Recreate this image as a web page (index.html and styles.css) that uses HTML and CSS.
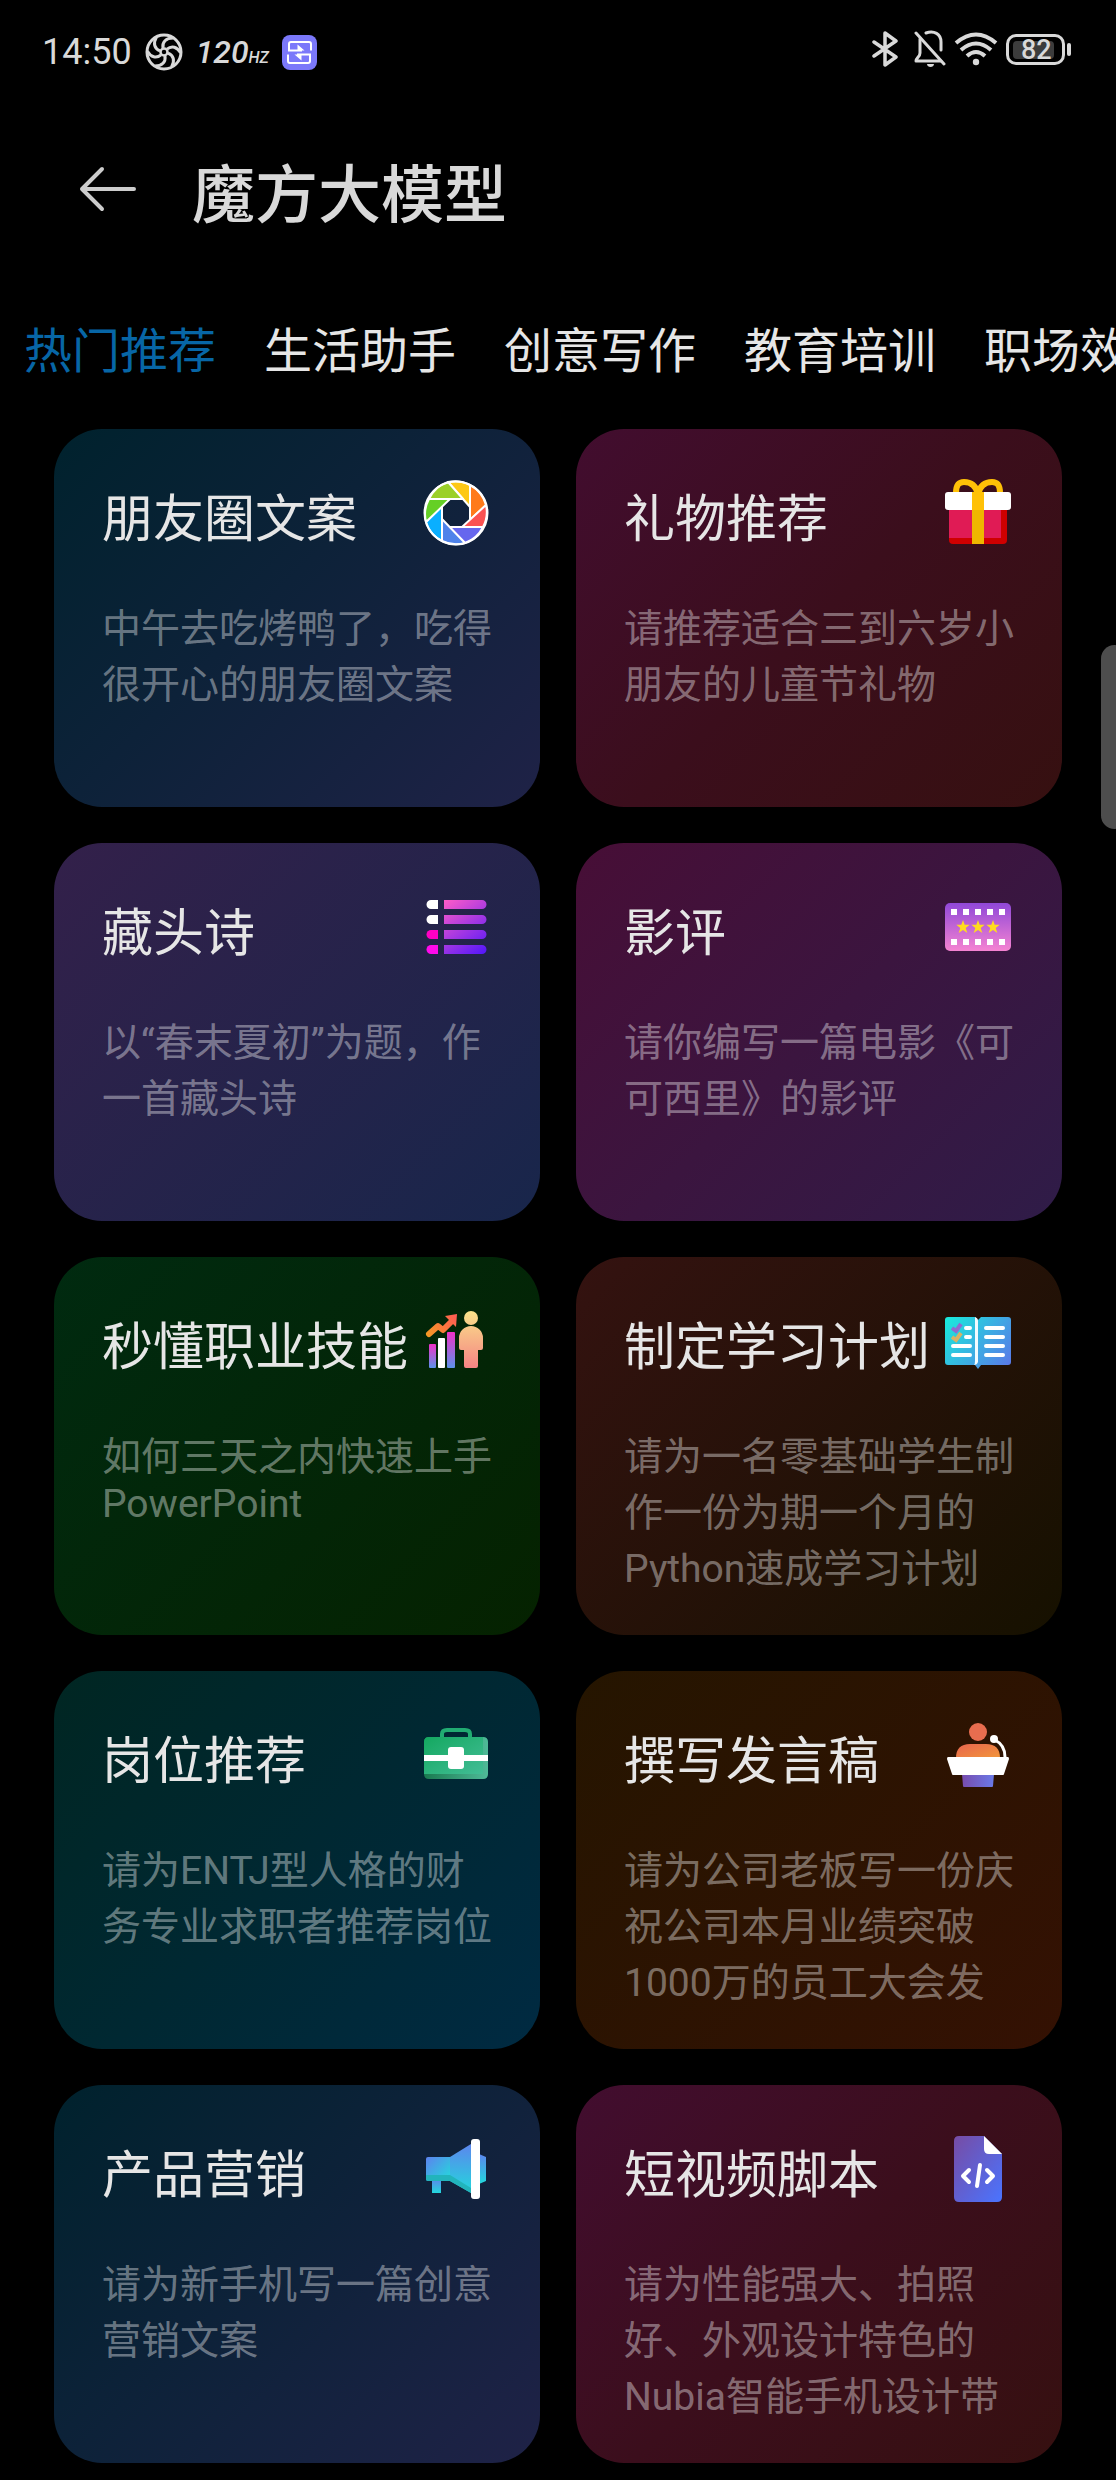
FILE: index.html
```html
<!DOCTYPE html>
<html lang="zh-CN">
<head>
    <meta charset="utf-8">
    <meta name="viewport" content="width=device-width, initial-scale=1">
    <title>魔方大模型</title>
    <link rel="stylesheet" href="styles.css">
</head>
<body>
    <div class="status-bar">
        <div class="status-left">
            <span class="time">14:50</span>
            <svg class="icon-fan" width="38" height="38" viewBox="0 0 38 38" fill="none" stroke="#d9d9d9" stroke-width="3">
                <circle cx="19" cy="19" r="17"/>
                <circle cx="19" cy="19" r="3.500" stroke-width="2.500"/>
                <g id="blade"><path d="M18 15C17 9 21 5 28 5"/></g>
                <use href="#blade" transform="rotate(60 19 19)"/>
                <use href="#blade" transform="rotate(120 19 19)"/>
                <use href="#blade" transform="rotate(180 19 19)"/>
                <use href="#blade" transform="rotate(240 19 19)"/>
                <use href="#blade" transform="rotate(300 19 19)"/>
            </svg>
            <span class="refresh">120<small>HZ</small></span>
            <svg width="35" height="35" viewBox="0 0 35 35">
                <rect width="35" height="35" rx="8" fill="#7b78fa"/>
                <path d="M29 15.500V9a2 2 0 0 0-2-2H9a2 2 0 0 0-2 2v6.500h13M6 19.500V26a2 2 0 0 0 2 2h18a2 2 0 0 0 2-2v-6.500H15" fill="none" stroke="#fff" stroke-width="2"/>
                <path d="M15.500 9.500l7 6h-7zM19.500 25.500l-7-6h7z" fill="#fff"/>
            </svg>
        </div>
        <div class="status-right">
            <svg width="34" height="36" viewBox="0 0 34 36" fill="none" stroke="#d9d9d9" stroke-width="3.500" stroke-linejoin="round" stroke-linecap="round">
                <path d="M2 11l22 15-11 8V2l11 8L2 25"/>
            </svg>
            <svg width="32" height="38" viewBox="0 0 32 38" fill="none" stroke="#d9d9d9" stroke-width="3" stroke-linecap="round">
                <path d="M2 3l28 31"/>
                <path d="M6 9v14c0 4-4 5-4 8h25M12 3c8-3 15 1 15 9v8" stroke-linejoin="round"/>
                <path d="M13 34h7c0 4-7 4-7 0z" fill="#d9d9d9" stroke="none"/>
            </svg>
            <svg width="44" height="34" viewBox="0 0 44 34" fill="none" stroke="#d9d9d9" stroke-width="4">
                <path d="M2 11Q22-6 42 11M7 18Q22 5 37 18M13 24Q22 16 31 24"/>
                <circle cx="22" cy="30" r="3.200" fill="#d9d9d9" stroke="none"/>
            </svg>
            <div class="battery"><span class="level">82</span></div>
        </div>
    </div>

    <header class="header">
        <button class="back" type="button" aria-label="返回">
            <svg width="60" height="48" viewBox="0 0 60 48" fill="none" stroke="#ccc" stroke-width="4" stroke-linecap="round" stroke-linejoin="round">
                <path d="M24 4L4 24l20 20M4 24h52"/>
            </svg>
        </button>
        <h1>魔方大模型</h1>
    </header>

    <nav class="tabs">
        <a class="tab active" href="#hot">热门推荐</a>
        <a class="tab" href="#life">生活助手</a>
        <a class="tab" href="#writing">创意写作</a>
        <a class="tab" href="#education">教育培训</a>
        <a class="tab" href="#office">职场效率</a>
    </nav>

    <main class="cards">
        <a class="card navy" href="#">
            <div class="card-head">
                <h2>朋友圈文案</h2>
                <svg class="card-icon" viewBox="0 0 72 72">
                    <g stroke="#fff" stroke-width="2" stroke-linejoin="round">
                        <path d="M28 5A32 32 0 0 1 50 8V30z" fill="#fdc816"/>
                        <path d="M50 8A32 32 0 0 1 66 28L50 43z" fill="#ff7a1a"/>
                        <path d="M66 28A32 32 0 0 1 63 50H42z" fill="#fb5252"/>
                        <path d="M63 50A32 32 0 0 1 45 66L29 50z" fill="#6666ee"/>
                        <path d="M45 66A32 32 0 0 1 22 64V42z" fill="#4f83ea"/>
                        <path d="M22 64A32 32 0 0 1 6 45L22 29z" fill="#0aafff"/>
                        <path d="M6 45A32 32 0 0 1 9 22H30z" fill="#65d025"/>
                        <path d="M9 22A32 32 0 0 1 28 5L43 22z" fill="#9bd028"/>
                    </g>
                    <circle cx="36" cy="36" r="31.500" fill="none" stroke="#fff" stroke-width="2"/>
                </svg>
            </div>
            <p>中午去吃烤鸭了，吃得很开心的朋友圈文案</p>
        </a>

        <a class="card wine" href="#">
            <div class="card-head">
                <h2>礼物推荐</h2>
                <svg class="card-icon" viewBox="0 0 72 72">
                    <path d="M36 17C34 9 29 5 22 5c-6 0-8 4-8 11M36 17c2-8 7-12 14-12 6 0 8 4 8 11" fill="none" stroke="#ffc107" stroke-width="6"/>
                    <path d="M7 32h58v31a4 4 0 0 1-4 4H11a4 4 0 0 1-4-4z" fill="#cf0000"/>
                    <path d="M7 32h52v29H7z" fill="#e01b55"/>
                    <rect x="3" y="15" width="66" height="18" rx="3" fill="#fff"/>
                    <path d="M30 15h12v18H30z" fill="#ffc107"/>
                    <path d="M30 33h12v34H30z" fill="#efb700"/>
                </svg>
            </div>
            <p>请推荐适合三到六岁小朋友的儿童节礼物</p>
        </a>

        <a class="card indigo" href="#">
            <div class="card-head">
                <h2>藏头诗</h2>
                <svg class="card-icon" viewBox="0 0 72 72">
                    <defs>
                        <linearGradient id="gList" gradientUnits="userSpaceOnUse" x1="24" y1="9" x2="66" y2="63">
                            <stop offset="0" stop-color="#ff5cc8"/>
                            <stop offset="1" stop-color="#5216fa"/>
                        </linearGradient>
                    </defs>
                    <path d="M18 9h-7a4 4 0 0 0 0 9h7zM18 24h-7a4 4 0 0 0 0 9h7z" fill="#fff"/>
                    <path d="M18 39h-7a4 4 0 0 0 0 9h7z" fill="#ff00c4"/>
                    <path d="M18 54h-7a4 4 0 0 0 0 9h7z" fill="#ff0aec"/>
                    <path d="M24 9h38a4 4 0 0 1 0 9H24zM24 24h38a4 4 0 0 1 0 9H24zM24 39h38a4 4 0 0 1 0 9H24zM24 54h38a4 4 0 0 1 0 9H24z" fill="url(#gList)"/>
                </svg>
            </div>
            <p>以“春末夏初”为题，作一首藏头诗</p>
        </a>

        <a class="card purple" href="#">
            <div class="card-head">
                <h2>影评</h2>
                <svg class="card-icon" viewBox="0 0 72 72">
                    <defs>
                        <linearGradient id="gFilm" x1="0" y1="0" x2="0" y2="1">
                            <stop offset="0" stop-color="#9048d8"/>
                            <stop offset="1" stop-color="#f583d2"/>
                        </linearGradient>
                        <path id="star" d="M0-7l1.700 4.800h5L2.700 1l1.600 5L0 3l-4.300 3 1.600-5-4-3.200h5z"/>
                    </defs>
                    <rect x="3" y="12" width="66" height="48" rx="5" fill="url(#gFilm)"/>
                    <path d="M9 21h54M9 51h54" stroke="#fff" stroke-width="6" stroke-dasharray="6 6"/>
                    <g fill="#ffdc1e">
                        <use href="#star" x="21" y="36"/>
                        <use href="#star" x="36" y="36"/>
                        <use href="#star" x="51" y="36"/>
                    </g>
                </svg>
            </div>
            <p>请你编写一篇电影《可可西里》的影评</p>
        </a>

        <a class="card green" href="#">
            <div class="card-head">
                <h2>秒懂职业技能</h2>
                <svg class="card-icon" viewBox="0 0 72 72">
                    <defs>
                        <linearGradient id="gBar" x1="0" y1="0" x2="0" y2="1">
                            <stop offset="0" stop-color="#f032c8"/>
                            <stop offset="1" stop-color="#5c92ea"/>
                        </linearGradient>
                        <linearGradient id="gArrow" gradientUnits="userSpaceOnUse" x1="6" y1="30" x2="37" y2="10">
                            <stop offset="0" stop-color="#f59a23"/>
                            <stop offset="1" stop-color="#ff5a55"/>
                        </linearGradient>
                        <linearGradient id="gMan" gradientUnits="userSpaceOnUse" x1="51" y1="6" x2="51" y2="63">
                            <stop offset="0" stop-color="#fae38a"/>
                            <stop offset="1" stop-color="#f58484"/>
                        </linearGradient>
                    </defs>
                    <rect x="9" y="39" width="7" height="24" rx="1" fill="url(#gBar)"/>
                    <rect x="18" y="33" width="7" height="30" rx="1" fill="#fff"/>
                    <rect x="27" y="27" width="8" height="36" rx="1" fill="url(#gBar)"/>
                    <path d="M9 29l9-8 5 4 9-9" fill="none" stroke="url(#gArrow)" stroke-width="6" stroke-linecap="round" stroke-linejoin="round"/>
                    <path d="M37 9L25 11l11 11z" fill="url(#gArrow)"/>
                    <circle cx="51" cy="13" r="7" fill="url(#gMan)"/>
                    <path d="M39 33a12 12 0 0 1 24 0v10q0 2-2 2h-3v16q0 2-2 2H46q-2 0-2-2V45h-3q-2 0-2-2z" fill="url(#gMan)"/>
                </svg>
            </div>
            <p>如何三天之内快速上手PowerPoint</p>
        </a>

        <a class="card brown" href="#">
            <div class="card-head">
                <h2>制定学习计划</h2>
                <svg class="card-icon" viewBox="0 0 72 72">
                    <defs>
                        <linearGradient id="gBook" gradientUnits="userSpaceOnUse" x1="3" y1="12" x2="69" y2="60">
                            <stop offset="0" stop-color="#18ecdc"/>
                            <stop offset="1" stop-color="#5a78e8"/>
                        </linearGradient>
                    </defs>
                    <path d="M6 12h27l3 3 3-3h27a3 3 0 0 1 3 3v42a3 3 0 0 1-3 3H39l-3 4-3-4H6a3 3 0 0 1-3-3V15a3 3 0 0 1 3-3z" fill="url(#gBook)"/>
                    <path d="M33 12q3 1 3 4v41q-1 3-4 3 1-1 1-4z" fill="#f2fbff"/>
                    <g stroke="#fff" stroke-width="4" stroke-linecap="round">
                        <path d="M24 23h4M24 32h4M11 41h17M11 50h17M44 23h17M44 32h17M44 41h17M44 50h17"/>
                    </g>
                    <path d="M10 23l4 3 5-7" fill="none" stroke="#8f6bd0" stroke-width="4"/>
                    <path d="M10 32l4 3 5-7" fill="none" stroke="#d8b266" stroke-width="4"/>
                </svg>
            </div>
            <p>请为一名零基础学生制作一份为期一个月的Python速成学习计划</p>
        </a>

        <a class="card teal" href="#">
            <div class="card-head">
                <h2>岗位推荐</h2>
                <svg class="card-icon" viewBox="0 0 72 72">
                    <defs>
                        <linearGradient id="gCase" x1="0" y1="0" x2="1" y2="1">
                            <stop offset="0" stop-color="#14a860"/>
                            <stop offset="1" stop-color="#43bd96"/>
                        </linearGradient>
                        <linearGradient id="gCaseEdge" x1="0" y1="0" x2="1" y2="0">
                            <stop offset="0" stop-color="#1a7a50"/>
                            <stop offset="1" stop-color="#4fba98"/>
                        </linearGradient>
                    </defs>
                    <path d="M22 19v-4q0-4 5-4h18q5 0 5 4v4" fill="none" stroke="#21ac72" stroke-width="4"/>
                    <path d="M9 18h54q5 0 5 5v32q0 5-5 5H9q-5 0-5-5V23q0-5 5-5z" fill="url(#gCaseEdge)"/>
                    <path d="M9 18h54v37H4V23q0-5 5-5z" fill="url(#gCase)"/>
                    <path d="M4 36h64v6H4z" fill="#fff"/>
                    <rect x="28" y="28" width="16" height="22" rx="3" fill="#fff"/>
                </svg>
            </div>
            <p>请为ENTJ型人格的财务专业求职者推荐岗位</p>
        </a>

        <a class="card rust" href="#">
            <div class="card-head">
                <h2>撰写发言稿</h2>
                <svg class="card-icon" viewBox="0 0 72 72">
                    <defs>
                        <linearGradient id="gSpeaker" x1="0" y1="0" x2="1" y2="1">
                            <stop offset="0" stop-color="#e8654f"/>
                            <stop offset="1" stop-color="#f2963a"/>
                        </linearGradient>
                        <linearGradient id="gStand" x1="0" y1="0" x2="1" y2="0">
                            <stop offset="0" stop-color="#774cae"/>
                            <stop offset="1" stop-color="#6a7ae8"/>
                        </linearGradient>
                    </defs>
                    <circle cx="36" cy="13" r="9" fill="#e86d4f"/>
                    <path d="M14 39q0-14 14-14h16q14 0 14 14z" fill="url(#gSpeaker)"/>
                    <path d="M20 55h32l-1 12q0 1-1 1H22q-1 0-1-1z" fill="url(#gStand)"/>
                    <path d="M6 38h60q1 0 1 2l-5 15q0 1-1 1H11q-1 0-1-1L5 40q0-2 1-2z" fill="#fff"/>
                    <circle cx="52" cy="20" r="4" fill="#fff"/>
                    <path d="M53 21q10 5 10 17" fill="none" stroke="#fff" stroke-width="3"/>
                </svg>
            </div>
            <p>请为公司老板写一份庆祝公司本月业绩突破1000万的员工大会发</p>
        </a>

        <a class="card navy" href="#">
            <div class="card-head">
                <h2>产品营销</h2>
                <svg class="card-icon" viewBox="0 0 72 72">
                    <defs>
                        <linearGradient id="gHorn" x1="0" y1="0" x2="1" y2="1">
                            <stop offset="0" stop-color="#5c82ee"/>
                            <stop offset="1" stop-color="#22dcdc"/>
                        </linearGradient>
                        <linearGradient id="gCone" x1="0" y1="0" x2="0" y2="1">
                            <stop offset="0" stop-color="#5c86ee"/>
                            <stop offset="1" stop-color="#22d8dc"/>
                        </linearGradient>
                    </defs>
                    <path d="M12 46h9v14h-9z" fill="url(#gCone)"/>
                    <path d="M8 24h22v24H8q-2 0-2-2V26q0-2 2-2z" fill="url(#gHorn)"/>
                    <path d="M30 24l21-13v49L30 48z" fill="url(#gCone)"/>
                    <path d="M6 42h24l21 13v5L30 48H8q-2 0-2-2z" fill="#22b4bc"/>
                    <path d="M59 21l7 3v24l-7 3z" fill="url(#gCone)"/>
                    <rect x="51" y="6" width="9" height="60" rx="3" fill="#fff"/>
                </svg>
            </div>
            <p>请为新手机写一篇创意营销文案</p>
        </a>

        <a class="card wine" href="#">
            <div class="card-head">
                <h2>短视频脚本</h2>
                <svg class="card-icon" viewBox="0 0 72 72">
                    <defs>
                        <linearGradient id="gFile" x1="0" y1="0" x2="1" y2="1">
                            <stop offset="0" stop-color="#774ca4"/>
                            <stop offset="1" stop-color="#4a74ff"/>
                        </linearGradient>
                    </defs>
                    <path d="M17 3h25l18 18v43q0 5-5 5H17q-5 0-5-5V8q0-5 5-5z" fill="url(#gFile)"/>
                    <path d="M42 3l18 18H47q-5 0-5-5z" fill="#fff"/>
                    <path d="M27 37l-6 6 6 6M45 37l6 6-6 6M38 32l-3 21" fill="none" stroke="#fff" stroke-width="4" stroke-linecap="round" stroke-linejoin="round"/>
                </svg>
            </div>
            <p>请为性能强大、拍照好、外观设计特色的Nubia智能手机设计带</p>
        </a>
    </main>

    <div class="side-handle"></div>
</body>
</html>
```
FILE: styles.css
```css
* {
    box-sizing: border-box;
}
body {
    font-family: Roboto, "Noto Sans CJK SC", sans-serif;
    margin: 0;
    padding: 0;
    background-color: #000;
    color: #e6e6e6;
    overflow-x: hidden;
}
a {
    color: inherit;
    text-decoration: none;
}
svg {
    display: block;
    flex-shrink: 0;
}

/* status bar */
.status-bar {
    display: flex;
    justify-content: space-between;
    align-items: center;
    height: 104px;
    padding: 0 45px 0 42px;
    color: #d9d9d9;
}
.status-left {
    display: flex;
    align-items: center;
    gap: 13px;
}
.time {
    font-size: 36px;
}
.refresh {
    font-size: 32px;
    font-weight: 500;
    font-style: italic;
}
.refresh small {
    font-size: 16px;
}
.status-right {
    display: flex;
    align-items: center;
    gap: 8px;
    padding-bottom: 6px;
}
.battery {
    position: relative;
    width: 59px;
    height: 31px;
    margin-right: 6px;
    padding: 4px;
    border: 3px solid #d9d9d9;
    border-radius: 10px;
}
.battery::after {
    content: "";
    position: absolute;
    top: 6px;
    right: -9px;
    width: 4px;
    height: 13px;
    border-radius: 2px;
    background-color: #d9d9d9;
}
.level {
    display: block;
    width: 41px;
    height: 18px;
    padding-left: 8px;
    border-radius: 4px;
    background-color: #3c3c3c;
    font-size: 27px;
    font-weight: 500;
    line-height: 18px;
}

/* title row */
.header {
    display: flex;
    align-items: center;
    height: 170px;
    padding: 0 78px;
    gap: 54px;
}
.back {
    padding: 0;
    border: none;
    background: none;
    cursor: pointer;
}
h1 {
    margin: 0;
    font-size: 63px;
    font-weight: 500;
    color: #d9d9d9;
}

/* category tabs */
.tabs {
    display: flex;
    gap: 48px;
    padding: 38px 24px 47px;
    overflow: hidden;
    white-space: nowrap;
}
.tab {
    flex-shrink: 0;
    font-size: 48px;
}
.tab.active {
    color: #0766a6;
}

/* cards */
.cards {
    display: grid;
    grid-template-columns: 1fr 1fr;
    gap: 36px;
    padding: 0 54px 16px;
}
.card {
    height: 378px;
    padding: 48px;
    border-radius: 48px;
    display: flex;
    flex-direction: column;
    gap: 48px;
}
.card-head {
    display: flex;
    justify-content: space-between;
    align-items: flex-start;
    height: 72px;
    flex-shrink: 0;
}
.card-icon {
    width: 72px;
    height: 72px;
}
h2 {
    margin: 0;
    padding-top: 1px;
    font-size: 51px;
    font-weight: normal;
    white-space: nowrap;
}
.card p {
    margin: 0;
    font-size: 39px;
    overflow: hidden;
    color: rgba(255, 255, 255, 0.4);
}
.navy {
    background: linear-gradient(135deg, #00222d, #0d2239 45%, #1f2247);
}
.wine {
    background: linear-gradient(135deg, #420d2f, #3b0e1c 50%, #361010);
}
.indigo {
    background: linear-gradient(135deg, #33204a, #18264b);
}
.purple {
    background: linear-gradient(135deg, #470e36, #2f1c48);
}
.green {
    background: linear-gradient(135deg, #002a10, #052200);
}
.brown {
    background: linear-gradient(135deg, #341210, #161100);
}
.teal {
    background: linear-gradient(135deg, #002622, #002a42);
}
.rust {
    background: linear-gradient(135deg, #251500, #341103);
}

/* edge panel handle */
.side-handle {
    position: fixed;
    top: 645px;
    right: -12px;
    width: 27px;
    height: 184px;
    border-radius: 24px;
    background-color: #4d4d4d;
}
```
